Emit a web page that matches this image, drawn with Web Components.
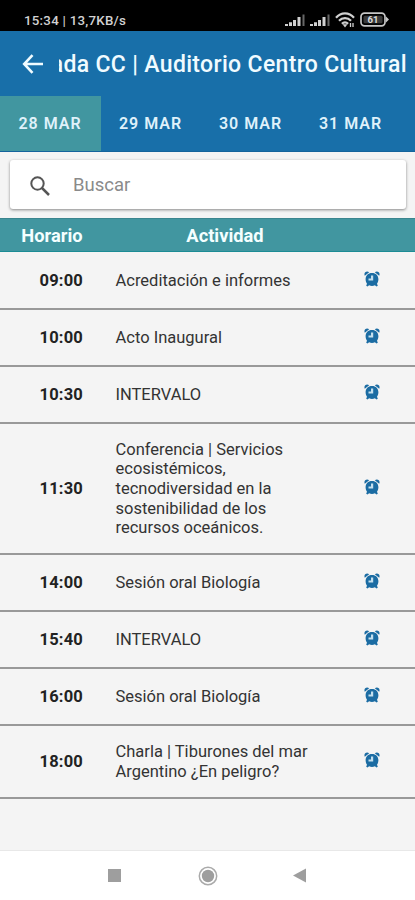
<!DOCTYPE html>
<html lang="es">
<head>
<meta charset="utf-8">
<meta name="viewport" content="width=device-width, initial-scale=1">
<title>Agenda</title>
<style>
  body {
    margin: 0;
    font-family: Roboto, "Liberation Sans", sans-serif;
    color: #333;
    background: #f4f4f4;
    --primary: #186fa9;
    --accent: #4196a0;
  }
</style>
</head>
<body>
<agenda-app></agenda-app>

<script>
class StatusBar extends HTMLElement {
  constructor() {
    super();
    this.attachShadow({ mode: "open" }).innerHTML = `
      <style>
      :host {
        display: flex;
        box-sizing: border-box;
        height: 31px;
        padding: 10px 26px 0 24px;
        justify-content: space-between;
        background: #000;
        color: #d2d2d2;
        font-size: 13.3px;
        font-weight: 500;
        line-height: 21px;
      }
      .clock {
        letter-spacing: 0.25px;
        white-space: nowrap;
      }
      .icons {
        display: flex;
        gap: 5px;
        height: 19px;
        align-items: center;
      }
      svg {
        display: block;
      }
      .signal {
        margin-top: 2px;
      }
      </style>
      <span class="clock">15:34 | 13,7KB/s</span>
      <div class="icons">
        ${this.signal()}
        ${this.signal()}
        <svg width="20" height="16" viewBox="0 0 20 16" fill="none" stroke="#d0d0d0" stroke-width="2.2">
          <path d="M1 5.7C6-.1 14-.1 19 5.7M4 8.8c3.4-3.7 8.6-3.7 12 0M6.9 11.7c1.8-1.9 4.4-1.9 6.2 0"/>
          <path d="M7.5 12.3h5L10 15.5z" fill="#d0d0d0" stroke="none"/>
          <path d="M15.5 11v4M18 11v4" stroke-width="1.3"/>
        </svg>
        <svg width="29" height="15" viewBox="0 0 29 15">
          <rect x="1" y="1.2" width="24" height="12.6" rx="3.5" fill="none" stroke="#c6c6c6" stroke-width="1.7"/>
          <path d="M26 4.5 29 7.5 26 10.5z" fill="#c6c6c6"/>
          <rect x="3.5" y="3.7" width="19" height="7.6" rx="1.5" fill="#3a3a3a"/>
          <text x="13" y="11" text-anchor="middle" font-size="9.5" font-weight="700" fill="#ddd">61</text>
        </svg>
      </div>
      `;
  }

  signal() {
    return `
        <svg class="signal" width="20" height="13" viewBox="0 0 20 13" fill="#d0d0d0">
          <path d="M0 10h3v2H0zM4 8.3h3V12H4zM8 6h3v6H8zM12.500 3h3v9h-3z"/>
          <path d="M17.5 .5h2V12h-2z" fill="#666"/>
        </svg>`;
  }
}

class TopBar extends HTMLElement {
  constructor() {
    super();
    this.attachShadow({ mode: "open" }).innerHTML = `
      <style>
      :host {
        display: flex;
        box-sizing: border-box;
        height: 65px;
        padding: 1px 8px 0 22px;
        align-items: center;
        background: var(--primary);
        color: #f0fbff;
      }
      svg {
        flex: none;
        margin-right: 15px;
      }
      .title {
        flex: 1;
        display: flex;
        justify-content: flex-end;
        overflow: hidden;
        padding-top: 1px;
        font-size: 23px;
        font-weight: 500;
        letter-spacing: 0.33px;
        line-height: 32px;
        white-space: nowrap;
      }
      </style>
      <svg width="22" height="20" viewBox="0 0 22 20" fill="none" stroke="#f0fbff" stroke-width="2.6">
        <path d="M10.5 1.2 2.2 10l8.3 8.8M2 10h19"/>
      </svg>
      <div class="title"><slot></slot></div>
      `;
  }
}

class DayTab extends HTMLElement {
  constructor() {
    super();
    this.attachShadow({ mode: "open" }).innerHTML = `
      <style>
      :host {
        display: flex;
        flex: none;
        box-sizing: border-box;
        width: 100px;
        padding-right: 1px;
        align-items: center;
        justify-content: center;
        color: #dff1fa;
        font-size: 16px;
        font-weight: 600;
        letter-spacing: 1px;
      }
      :host([active]) {
        width: 101px;
        background: var(--accent);
      }
      </style>
      <slot></slot>
      `;
  }
}

class DayTabs extends HTMLElement {
  constructor() {
    super();
    this.attachShadow({ mode: "open" }).innerHTML = `
      <style>
      :host {
        display: flex;
        box-sizing: border-box;
        height: 56px;
        border-bottom: 1px solid #14649c;
        background: var(--primary);
      }
      </style>
      <slot></slot>
      `;
  }
}

class SearchBox extends HTMLElement {
  constructor() {
    super();
    this.attachShadow({ mode: "open" }).innerHTML = `
      <style>
      :host {
        display: block;
        padding: 8px 9px 9px 10px;
        background: #f4f4f4;
      }
      .box {
        display: flex;
        height: 49px;
        padding-left: 20px;
        align-items: center;
        gap: 23px;
        border-radius: 3px;
        background: #fff;
        box-shadow: 0 1px 3px rgba(0, 0, 0, 0.45);
        color: #8a8a8a;
        font-size: 18.5px;
      }
      svg {
        margin-top: 2px;
      }
      </style>
      <div class="box">
        <svg width="20" height="20" viewBox="0 0 20 20" fill="none" stroke="#555" stroke-width="2">
          <circle cx="7.5" cy="7.5" r="6.2"/>
          <path d="m12 12 7 7" stroke-width="2.5"/>
        </svg>
        <slot></slot>
      </div>
      `;
  }
}

class AgendaHeader extends HTMLElement {
  constructor() {
    super();
    this.attachShadow({ mode: "open" }).innerHTML = `
      <style>
      :host {
        display: grid;
        grid-template-columns: 104px 242px 1fr;
        box-sizing: border-box;
        height: 34px;
        border-top: 1px solid #3b858e;
        border-bottom: 1px solid #1c8c95;
        line-height: 33px;
        background: var(--accent);
        color: #f4ffff;
        font-size: 18.3px;
        font-weight: 700;
        text-align: center;
      }
      </style>
      <span>Horario</span>
      <span>Actividad</span>
      `;
  }
}

class AgendaRow extends HTMLElement {
  constructor() {
    super();
    this.attachShadow({ mode: "open" });
  }

  connectedCallback() {
    this.shadowRoot.innerHTML = `
      <style>
      :host {
        display: grid;
        grid-template-columns: 39.5px 76px 205px 1fr;
        box-sizing: border-box;
        min-height: 56.9px;
        padding: 16px 0 15.5px;
        align-items: center;
        border-bottom: 2px solid #999;
        color: #333;
        font-size: 16.5px;
        line-height: 19.65px;
      }
      .time {
        grid-column: 2;
        color: #222;
        font-weight: 700;
        letter-spacing: 0.2px;
      }
      svg {
        display: block;
        margin: -4px 0 0 43px;
      }
      </style>
      <span class="time">${this.getAttribute("time")}</span>
      <span class="name"><slot></slot></span>
      <svg width="16" height="16" viewBox="0 0 16 16" fill="#1b6ca3">
        <path d="M.8 4.8C-.6 1.6 2.4-.6 5.2 1.2zM15.2 4.8c1.4-3.2-1.6-5.4-4.4-3.6z"/>
        <path d="M8 1.9c4 0 6.4 2.6 6.4 6.4 0 1.9-.6 3.3-1.4 4.4l.8 2-1.3.8-1.6-1.3c-1.8.9-4 .9-5.8 0l-1.6 1.3-1.3-.8.8-2c-.8-1.1-1.4-2.5-1.4-4.400C1.6 4.5 4 1.9 8 1.9z"/>
        <path d="M7 4.500h2.200v5H4.500V7.500H7z" fill="#c3dfee"/>
      </svg>
      `;
  }
}

class NavBar extends HTMLElement {
  constructor() {
    super();
    this.attachShadow({ mode: "open" }).innerHTML = `
      <style>
      :host {
        display: grid;
        grid-template-columns: 93px 93px 90px;
        box-sizing: border-box;
        height: 49px;
        padding-left: 68px;
        align-items: center;
        justify-items: center;
        background: #fff;
      }
      </style>
      <svg width="13" height="13"><path d="M0 0h13v13H0z" fill="#9e9e9e"/></svg>
      <svg width="20" height="20" viewBox="0 0 20 20">
        <circle cx="10" cy="10" r="8.7" fill="none" stroke="#aaa" stroke-width="1.5"/>
        <circle cx="10" cy="10" r="6.2" fill="#9e9e9e"/>
      </svg>
      <svg width="13" height="15"><path d="M13 .5v14L0 7.5z" fill="#9e9e9e"/></svg>
      `;
  }
}

const ROWS = [
  ["09:00", "Acreditación e informes"],
  ["10:00", "Acto Inaugural"],
  ["10:30", "INTERVALO"],
  ["11:30", "Conferencia | Servicios ecosistémicos, tecnodiversidad en la sostenibilidad de los recursos oceánicos."],
  ["14:00", "Sesión oral Biología"],
  ["15:40", "INTERVALO"],
  ["16:00", "Sesión oral Biología"],
  ["18:00", "Charla | Tiburones del mar Argentino ¿En peligro?"],
];

class AgendaApp extends HTMLElement {
  constructor() {
    super();
    this.attachShadow({ mode: "open" }).innerHTML = `
      <style>
      :host {
        display: flex;
        flex-direction: column;
        height: 900px;
        overflow: hidden;
      }
      main {
        flex: 1;
        padding-top: 1px;
        border-bottom: 1px solid #e8e8e8;
      }
      </style>
      <status-bar></status-bar>
      <top-bar>Jornada CC | Auditorio Centro Cultural</top-bar>
      <day-tabs>
        <day-tab active>28 MAR</day-tab>
        <day-tab>29 MAR</day-tab>
        <day-tab>30 MAR</day-tab>
        <day-tab>31 MAR</day-tab>
      </day-tabs>
      <search-box>Buscar</search-box>
      <agenda-header></agenda-header>
      <main>
        ${ROWS.map(([time, name]) => `<agenda-row time="${time}">${name}</agenda-row>`).join("")}
      </main>
      <nav-bar></nav-bar>
      `;
  }
}

customElements.define("status-bar", StatusBar);
customElements.define("top-bar", TopBar);
customElements.define("day-tab", DayTab);
customElements.define("day-tabs", DayTabs);
customElements.define("search-box", SearchBox);
customElements.define("agenda-header", AgendaHeader);
customElements.define("agenda-row", AgendaRow);
customElements.define("nav-bar", NavBar);
customElements.define("agenda-app", AgendaApp);
</script>
</body>
</html>
